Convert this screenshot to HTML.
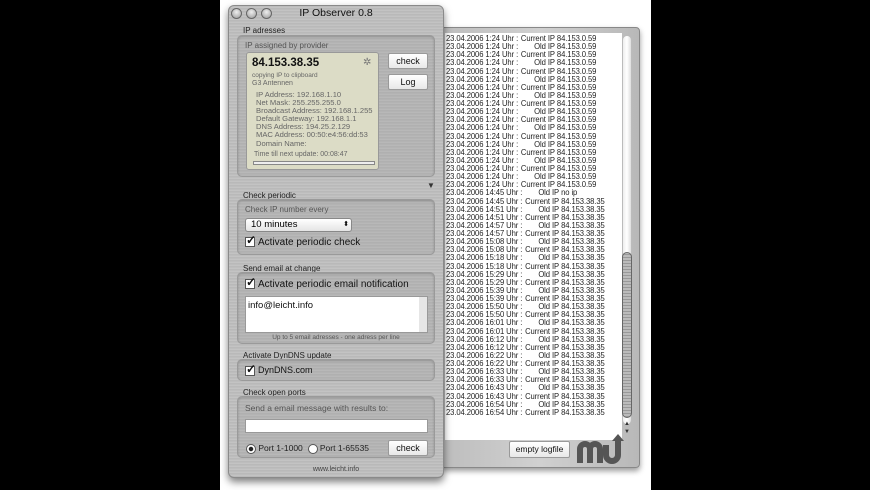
<!DOCTYPE html>
<html><head><style>
*{margin:0;padding:0;box-sizing:border-box}
body{width:870px;height:490px;background:#000;position:relative;overflow:hidden;font-family:"Liberation Sans",sans-serif}
.wbg{position:absolute;left:220px;top:0;width:431px;height:490px;background:#fff}
.abs{position:absolute}
.logw{left:440px;top:27px;width:200px;height:441px;background:linear-gradient(90deg,#bdbdbd,#d0d0d0 50%,#b8b8b8);border:1px solid #888;border-radius:4px;box-shadow:0 3px 6px rgba(0,0,0,.4)}
.logt{left:445px;top:33px;width:177px;height:407px;background:#fff}
.lines{left:446px;top:34px;font-size:8.6px;line-height:8.13px;color:#222;white-space:pre;letter-spacing:-0.1px;transform:scaleX(.89);transform-origin:0 0}
.lines b{font-weight:normal;display:inline-block;width:39px;text-align:right}
.main{left:228px;top:5px;width:216px;height:473px;border-radius:6px;border:1px solid #8a8a8a;background:repeating-linear-gradient(0deg,#b9b9b9 0 1px,#c3c3c3 1px 2px,#bdbdbd 2px 3px),#bdbdbd;box-shadow:0 4px 8px rgba(0,0,0,.5)}
.lbl{font-size:8px;color:#222}
.sub{font-size:8px;color:#555}
.grp{border:1px solid #9a9a9a;border-radius:5px;background:rgba(150,150,150,.25);box-shadow:inset 0 1px 2px rgba(0,0,0,.2)}
.btn{background:linear-gradient(#fff,#e8e8e8);border:1px solid #999;font-size:9px;text-align:center;color:#111;border-radius:2px}
.dot{width:11px;height:11px;border-radius:50%;background:radial-gradient(circle at 50% 35%,#eee,#999);border:1px solid #666;top:8px}
.cb{display:inline-block;width:10px;height:10px;border:1px solid #555;background:#fff;vertical-align:middle;position:relative;margin-right:3px}
.cb:after{content:"✓";position:absolute;left:0;top:-5px;font-size:12px;font-weight:bold;color:#111}
.yp{left:246px;top:52px;width:133px;height:118px;background:#dcdcc6;border:1px solid #999;border-radius:3px}
.yp div{position:absolute;font-size:7.6px;color:#666;white-space:nowrap}
</style></head><body>
<div class="wbg"></div>
<div class="abs logw"></div>
<div class="abs logt"></div>
<div class="abs" style="left:622px;top:35px;width:10px;height:390px;background:linear-gradient(90deg,#eee,#fff,#ddd);border:1px solid #bbb;border-radius:5px"></div>
<div class="abs" style="left:622px;top:252px;width:10px;height:166px;background:repeating-linear-gradient(0deg,#999 0 1px,#bbb 1px 3px);border:1px solid #666;border-radius:5px"></div>
<div class="abs" style="left:622px;top:420px;width:10px;height:18px;font-size:6px;color:#333;line-height:8px;text-align:center">▲<br>▼</div>
<div class="abs lines">23.04.2006 1:24 Uhr : <b>Current IP</b> 84.153.0.59
23.04.2006 1:24 Uhr : <b>Old IP</b> 84.153.0.59
23.04.2006 1:24 Uhr : <b>Current IP</b> 84.153.0.59
23.04.2006 1:24 Uhr : <b>Old IP</b> 84.153.0.59
23.04.2006 1:24 Uhr : <b>Current IP</b> 84.153.0.59
23.04.2006 1:24 Uhr : <b>Old IP</b> 84.153.0.59
23.04.2006 1:24 Uhr : <b>Current IP</b> 84.153.0.59
23.04.2006 1:24 Uhr : <b>Old IP</b> 84.153.0.59
23.04.2006 1:24 Uhr : <b>Current IP</b> 84.153.0.59
23.04.2006 1:24 Uhr : <b>Old IP</b> 84.153.0.59
23.04.2006 1:24 Uhr : <b>Current IP</b> 84.153.0.59
23.04.2006 1:24 Uhr : <b>Old IP</b> 84.153.0.59
23.04.2006 1:24 Uhr : <b>Current IP</b> 84.153.0.59
23.04.2006 1:24 Uhr : <b>Old IP</b> 84.153.0.59
23.04.2006 1:24 Uhr : <b>Current IP</b> 84.153.0.59
23.04.2006 1:24 Uhr : <b>Old IP</b> 84.153.0.59
23.04.2006 1:24 Uhr : <b>Current IP</b> 84.153.0.59
23.04.2006 1:24 Uhr : <b>Old IP</b> 84.153.0.59
23.04.2006 1:24 Uhr : <b>Current IP</b> 84.153.0.59
23.04.2006 14:45 Uhr : <b>Old IP</b> no ip
23.04.2006 14:45 Uhr : <b>Current IP</b> 84.153.38.35
23.04.2006 14:51 Uhr : <b>Old IP</b> 84.153.38.35
23.04.2006 14:51 Uhr : <b>Current IP</b> 84.153.38.35
23.04.2006 14:57 Uhr : <b>Old IP</b> 84.153.38.35
23.04.2006 14:57 Uhr : <b>Current IP</b> 84.153.38.35
23.04.2006 15:08 Uhr : <b>Old IP</b> 84.153.38.35
23.04.2006 15:08 Uhr : <b>Current IP</b> 84.153.38.35
23.04.2006 15:18 Uhr : <b>Old IP</b> 84.153.38.35
23.04.2006 15:18 Uhr : <b>Current IP</b> 84.153.38.35
23.04.2006 15:29 Uhr : <b>Old IP</b> 84.153.38.35
23.04.2006 15:29 Uhr : <b>Current IP</b> 84.153.38.35
23.04.2006 15:39 Uhr : <b>Old IP</b> 84.153.38.35
23.04.2006 15:39 Uhr : <b>Current IP</b> 84.153.38.35
23.04.2006 15:50 Uhr : <b>Old IP</b> 84.153.38.35
23.04.2006 15:50 Uhr : <b>Current IP</b> 84.153.38.35
23.04.2006 16:01 Uhr : <b>Old IP</b> 84.153.38.35
23.04.2006 16:01 Uhr : <b>Current IP</b> 84.153.38.35
23.04.2006 16:12 Uhr : <b>Old IP</b> 84.153.38.35
23.04.2006 16:12 Uhr : <b>Current IP</b> 84.153.38.35
23.04.2006 16:22 Uhr : <b>Old IP</b> 84.153.38.35
23.04.2006 16:22 Uhr : <b>Current IP</b> 84.153.38.35
23.04.2006 16:33 Uhr : <b>Old IP</b> 84.153.38.35
23.04.2006 16:33 Uhr : <b>Current IP</b> 84.153.38.35
23.04.2006 16:43 Uhr : <b>Old IP</b> 84.153.38.35
23.04.2006 16:43 Uhr : <b>Current IP</b> 84.153.38.35
23.04.2006 16:54 Uhr : <b>Old IP</b> 84.153.38.35
23.04.2006 16:54 Uhr : <b>Current IP</b> 84.153.38.35</div>
<div class="abs btn" style="left:509px;top:441px;width:61px;height:17px;line-height:15px;font-size:8.5px">empty logfile</div>
<svg class="abs" style="left:576px;top:433px" width="50" height="32" viewBox="0 0 50 32"><path d="M4 30V16a5 5 0 0 1 10 0v14M14 16a5 5 0 0 1 10 0v14M30 12v10a6 6 0 0 0 12 0V8" fill="none" stroke="#555" stroke-width="6"/><path d="M36 8l6-7 6 7z" fill="#555"/></svg>

<div class="abs main"></div>
<div class="abs dot" style="left:231px"></div>
<div class="abs dot" style="left:246px"></div>
<div class="abs dot" style="left:261px"></div>
<div class="abs" style="left:228px;top:7px;width:216px;text-align:center;font-size:10.5px;color:#111">IP Observer 0.8</div>

<div class="abs lbl" style="left:243px;top:26px">IP adresses</div>
<div class="abs grp" style="left:237px;top:35px;width:198px;height:142px"></div>
<div class="abs sub" style="left:245px;top:41px">IP assigned by provider</div>
<div class="abs yp">
<div style="left:5px;top:4px;font-size:11.5px;font-weight:bold;color:#111">84.153.38.35</div>
<div style="left:116px;top:4px;font-size:10px;color:#777">✲</div>
<div style="left:5px;top:19px;font-size:6.5px">copying IP to clipboard</div>
<div style="left:5px;top:27px;font-size:7px">G3 Antennen</div>
<div style="left:9px;top:38px;line-height:8.1px">IP Address: 192.168.1.10<br>Net Mask: 255.255.255.0<br>Broadcast Address: 192.168.1.255<br>Default Gateway: 192.168.1.1<br>DNS Address: 194.25.2.129<br>MAC Address: 00:50:e4:56:dd:53<br>Domain Name:</div>
<div style="left:7px;top:98px;font-size:7px">Time till next update: 00:08:47</div>
<div style="left:6px;top:108px;width:122px;height:4px;border:1px solid #888;background:#eee"></div>
</div>
<div class="abs btn" style="left:388px;top:53px;width:40px;height:16px;line-height:14px">check</div>
<div class="abs btn" style="left:388px;top:74px;width:40px;height:16px;line-height:14px">Log</div>
<div class="abs" style="left:427px;top:181px;font-size:8px;color:#333">▼</div>

<div class="abs lbl" style="left:243px;top:191px">Check periodic</div>
<div class="abs grp" style="left:237px;top:199px;width:198px;height:56px"></div>
<div class="abs sub" style="left:245px;top:205px">Check IP number every</div>
<div class="abs" style="left:245px;top:218px;width:107px;height:14px;background:linear-gradient(#fff,#e4e4e4);border:1px solid #888;border-radius:3px;font-size:9.5px;padding-left:5px;line-height:12px">10 minutes<span style="position:absolute;right:2px;top:0;font-size:7px">⬍</span></div>
<div class="abs" style="left:245px;top:237px;font-size:10px;color:#111"><span class="cb"></span>Activate periodic check</div>

<div class="abs lbl" style="left:243px;top:264px">Send email at change</div>
<div class="abs grp" style="left:237px;top:272px;width:198px;height:72px"></div>
<div class="abs" style="left:245px;top:279px;font-size:10px;color:#111"><span class="cb"></span>Activate periodic email notification</div>
<div class="abs" style="left:245px;top:296px;width:183px;height:37px;background:#fff;border:1px solid #999;font-size:9.5px;padding:3px 2px;color:#111">info@leicht.info<div style="position:absolute;right:0;top:0;width:8px;height:35px;background:#e6e6e6"></div></div>
<div class="abs" style="left:228px;top:334px;width:216px;text-align:center;font-size:6.5px;color:#555">Up to 5 email adresses - one adress per line</div>

<div class="abs lbl" style="left:243px;top:351px">Activate DynDNS update</div>
<div class="abs grp" style="left:237px;top:359px;width:198px;height:22px"></div>
<div class="abs" style="left:245px;top:365px;font-size:9px;color:#111"><span class="cb"></span>DynDNS.com</div>

<div class="abs lbl" style="left:243px;top:388px">Check open ports</div>
<div class="abs grp" style="left:237px;top:396px;width:198px;height:62px"></div>
<div class="abs sub" style="left:245px;top:403px;font-size:8.5px">Send a email message with results to:</div>
<div class="abs" style="left:245px;top:419px;width:183px;height:14px;background:#fff;border:1px solid #999"></div>
<div class="abs" style="left:246px;top:443px;font-size:8.5px;color:#222"><span style="display:inline-block;width:10px;height:10px;border-radius:50%;border:1px solid #555;background:radial-gradient(#222 2px,#fff 2.5px);vertical-align:middle"></span> Port 1-1000 &nbsp;<span style="display:inline-block;width:10px;height:10px;border-radius:50%;border:1px solid #555;background:#fff;vertical-align:middle"></span> Port 1-65535</div>
<div class="abs btn" style="left:388px;top:440px;width:40px;height:16px;line-height:14px">check</div>
<div class="abs" style="left:228px;top:466px;width:216px;text-align:center;font-size:7px;color:#444">www.leicht.info</div>
</body></html>
